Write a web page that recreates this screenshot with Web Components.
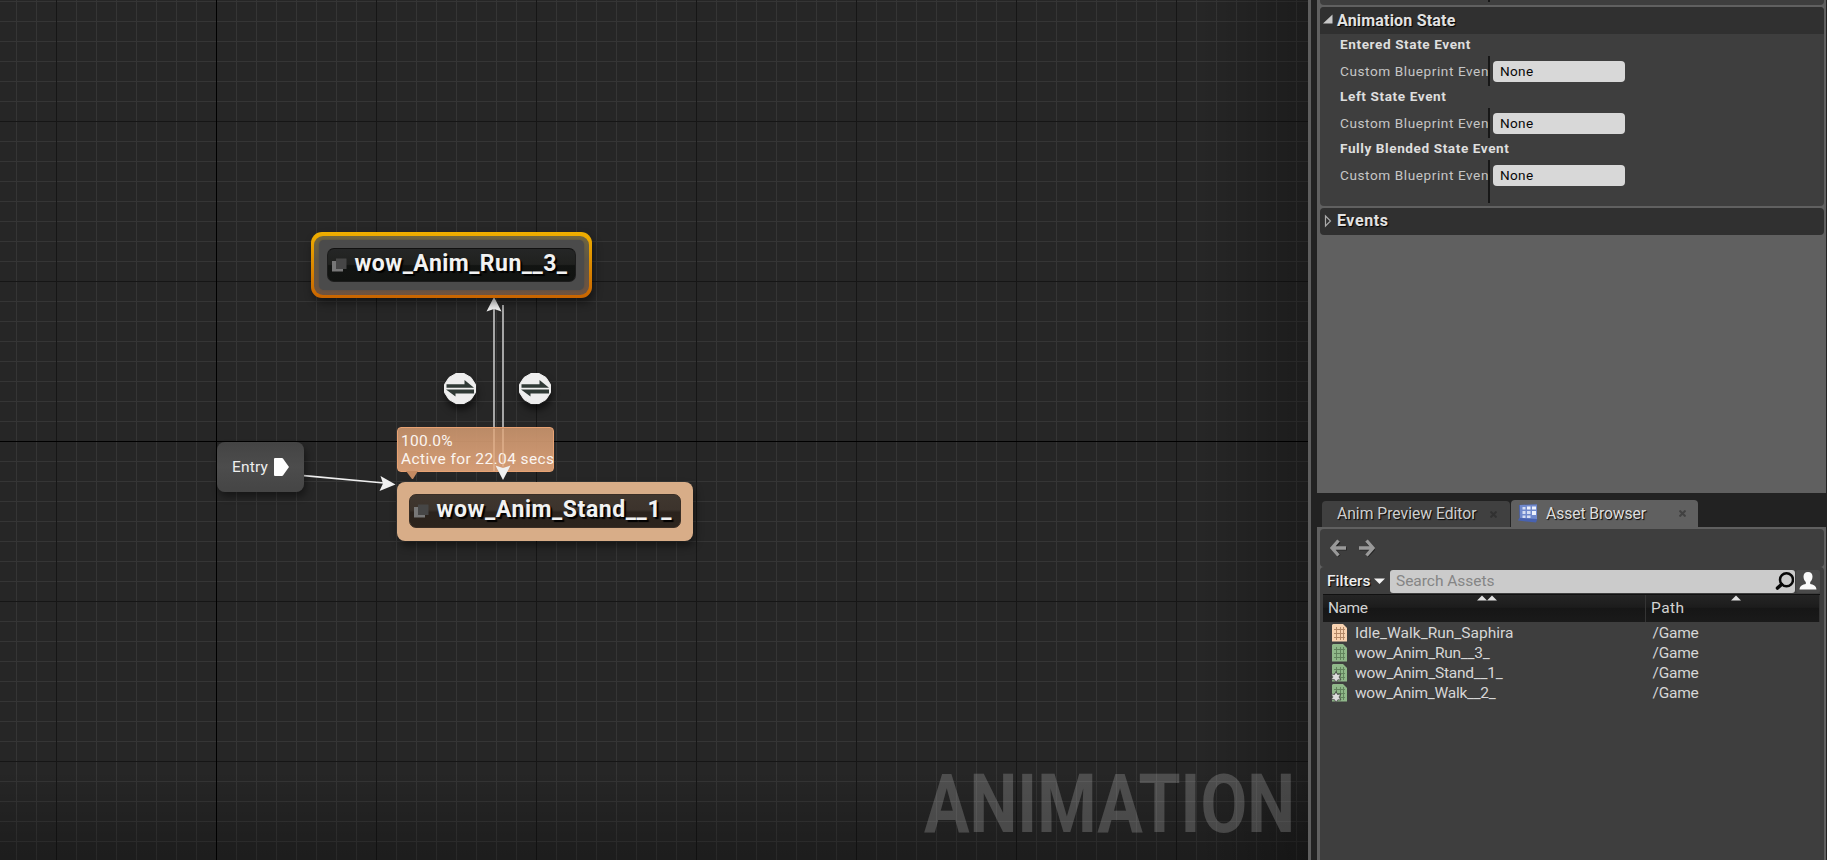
<!DOCTYPE html>
<html lang="en">
<head>
<meta charset="utf-8">
<title>Animation State Machine</title>
<style>
html,body{margin:0;height:100%;background:#222;overflow:hidden}
body{font-family:Roboto,"Liberation Sans",sans-serif;color:#dcdcdc}
</style>
</head>
<body>
<anim-editor></anim-editor>
<script>
const define=(name,html,setup)=>customElements.define(name,class extends HTMLElement{
  connectedCallback(){
    if(this.shadowRoot)return;
    const t=document.createElement('template');
    t.innerHTML=html;
    this.attachShadow({mode:'open'}).appendChild(t.content.cloneNode(true));
    if(setup)setup(this,this.shadowRoot);
  }
});

// Single-line label; "w" tracks the letters so the line takes that many pixels.
define('ui-text',`<style>:host{display:block;white-space:pre;flex:none;line-height:20px}span{display:inline-block}</style><span><slot></slot></span>`,(el,root)=>{
  const s=root.querySelector('span'),w=+el.getAttribute('w');
  if(w)s.style.letterSpacing=((w-s.getBoundingClientRect().width)/el.textContent.length)+'px';
});

define('state-node',`<style>
:host{display:flex;position:absolute;box-sizing:border-box;border-radius:9px;box-shadow:2px 5px 8px rgba(0,0,0,.45)}
:host([kind=selected]){left:311px;top:232px;width:281px;height:66px;padding:16px;background:linear-gradient(#efaf00,#c86400);border-radius:11px}
:host([kind=active]){left:397px;top:482px;width:296px;height:59px;padding:12px;background:#d8ad88;border-radius:8px}
:host([kind=selected])::before{content:"";position:absolute;inset:4px 3px 3px;border-radius:9px;background:linear-gradient(#6f6540,#5f5746 40%,#6f5340)}
:host([kind=selected])::after{content:"";position:absolute;inset:8px;border-radius:5px;background:#4b4b4b;box-shadow:0 0 2px #4d4b49}
.pill{position:relative;z-index:1;flex:1;display:flex;align-items:center;box-sizing:border-box;padding-left:4px;gap:7.500px;border-radius:7px;background:linear-gradient(#252626,#20211f 48%,#121412 52%,#111311);border:1px solid #1c1c1c;border-top-color:#111;height:34px}
:host([kind=active]) .pill{background:linear-gradient(#40372f,#3c332c 46%,#2b231d 54%,#2c241d);border-color:#3a2e25;height:34px}
::slotted(ui-text){font-weight:700;font-size:23px;color:#f2f2f2;text-shadow:2px 2px 1px #000;line-height:30px;margin-top:-2px}
svg{flex:none;margin-top:-1px}
</style><div class="pill"><svg width="15" height="14"><path d="M0 3h5v8h6v2.500H0z" fill="#777"/><path d="M4 .5h10.500v10.500H4z" fill="#464646"/></svg><slot></slot></div>`);

define('entry-node',`<style>
:host{position:absolute;left:217px;top:442px;width:87px;height:50px;box-sizing:border-box;padding:0 15px 0 15px;display:flex;align-items:center;gap:5.500px;border-radius:8px;background:linear-gradient(#444,#4c4c4c 50%,#454545);box-shadow:2px 5px 7px rgba(0,0,0,.4);font-size:15.500px;color:#eee}
svg{flex:none}ui-text{margin-top:-1px}
</style><ui-text w="36">Entry</ui-text><svg width="15" height="18"><path d="M1 0h7q1 0 2 2l5 7-5 7q-1 2-2 2H1q-1 0-1-1V1q0-1 1-1z" fill="#fff"/></svg>`);

define('status-bubble',`<style>
:host{position:absolute;left:397px;top:427px;width:157px;height:45px;box-sizing:border-box;border:1px solid #e8a273;border-radius:4px;background:linear-gradient(rgba(200,147,108,.92),rgba(222,163,122,.94));padding:4px 0 0 3px;font-size:15.500px;color:#fbf5f0}
ui-text{line-height:18px}
svg{position:absolute;left:7px;top:43px}
</style><ui-text w="52">100.0%</ui-text><ui-text w="153.5">Active for 22.04 secs</ui-text><svg width="14" height="9"><path d="M1 0h12L8 8H7z" fill="#c48a62"/></svg>`);

define('transition-badge',`<style>:host{position:absolute;width:32px;height:32px;top:373px;border-radius:50%;box-shadow:1px 5px 7px rgba(0,0,0,.55)}:host([side=left]){left:444px}:host([side=right]){left:519px}svg{display:block}</style>
<svg width="32" height="32"><path d="M12 .5h8l7 4 4.500 7v8l-4.500 7-7 4h-8l-7-4L.5 19.500v-8L5 4.500z" fill="#eee" stroke="#eee" stroke-linejoin="round"/><path d="M2.500 11.200h18V6.900l9.500 7.800H2.500z" fill="#303a36"/><path d="M30 16.500H2l9.500 7v-3H30z" fill="#303a36"/></svg>`);

define('state-graph',`<style>
:host{display:block;position:relative;overflow:hidden;background-color:#262626;background-image:
 linear-gradient(#000,#000),linear-gradient(#000,#000),
 linear-gradient(90deg,#161616 1px,transparent 1px),linear-gradient(#161616 1px,transparent 1px),
 linear-gradient(90deg,#353535 1px,transparent 1px),linear-gradient(#353535 1px,transparent 1px);
 background-size:1px 100%,100% 1px,160px 160px,160px 160px,20px 20px,20px 20px;
 background-position:216px 0,0 441px,56px 0,0 121px,16px 0,0 1px;
 background-repeat:no-repeat,no-repeat,repeat,repeat,repeat,repeat}
.shade{position:absolute;inset:0;background:linear-gradient(90deg,transparent 1200px,rgba(0,0,0,.28)),linear-gradient(transparent 770px,rgba(0,0,0,.25))}
.wires{position:absolute;inset:0}
.mark{position:absolute;right:13px;bottom:2.500px;width:371px;height:106px;font-weight:700;font-size:81px;color:rgba(255,255,255,.19)}
.mark ui-text{line-height:106px;transform-origin:0 50%;width:max-content}
</style>
<div class="shade"></div>
<div class="mark"><ui-text>ANIMATION</ui-text></div>
<svg class="wires" width="1308" height="860"><g stroke="#bdbdbd" stroke-width="1.700" fill="none"><path d="M494 308V471M503 305V471"/><path stroke="#eee" d="M304 475.700L384 483"/></g></svg>
<status-bubble></status-bubble>
<svg class="wires" width="1308" height="860"><g fill="#f0f0f0"><path d="M494 297l7.500 14.500-7.500-2.500-7.500 2.500z"/><path d="M503 480l-7.500-14.500 7.500 2.500 7.500-2.500z"/><path d="M395.500 484.500L379.500 491l3.500-7.500-2.500-7.500z"/></g><path d="M494 429V471M503 429V466" stroke="#ecc09c" stroke-width="1.500" opacity=".5"/></svg>
<entry-node></entry-node>
<state-node kind="selected"><ui-text w="213">wow_Anim_Run__3_</ui-text></state-node>
<state-node kind="active"><ui-text w="235.500">wow_Anim_Stand__1_</ui-text></state-node>
<transition-badge side="left"></transition-badge><transition-badge side="right"></transition-badge>`,(el,root)=>{
  // condense the watermark to the width of its box
  const t=root.querySelector('.mark ui-text');
  t.style.transform='scaleX('+371/t.getBoundingClientRect().width+')';
});

define('event-group',`<style>
:host{display:block;height:52px;font-size:13.600px}
.title{height:22px;padding-left:20px;font-weight:700;color:#dedede}
.title ui-text{line-height:25.500px}
.row{display:flex;height:30px;align-items:center}
.name{width:148px;padding-left:20px;color:#c6c6c6;flex:none}
.bar{width:2px;height:30px;background:#171717;flex:none}
:host([last]) .bar{height:43px;align-self:flex-start}
.input{margin-left:2.500px;width:132px;height:21px;box-sizing:border-box;padding-left:7.500px;border-radius:4px;background:#d8d8d8;color:#080808}
.input ui-text{line-height:21px}
</style><div class="title"><slot></slot></div><div class="row"><div class="name"><ui-text w="149">Custom Blueprint Even</ui-text></div><div class="bar"></div><div class="input"><ui-text w="33.500">None</ui-text></div></div>`);

define('details-panel',`<style>
:host{display:flex;flex-direction:column;box-sizing:border-box;height:493px;padding:0 2px 0 3px;background:#606060;gap:2px}
.prev{height:5px;background:#3e3e3e;border-radius:0 0 4px 4px;flex:none}
.prev i{display:block;width:2px;height:2px;margin-left:168px;background:#171717}
.cat{background:#3e3e3e;border-radius:4px;overflow:hidden;flex:none}
.open{height:199px}
header{display:flex;align-items:center;height:27px;background:#303030;font-size:16px;font-weight:700;color:#e2e2e2;text-shadow:1px 1px 1px #000}
header svg{width:17px;height:16px;flex:none}
header ui-text{line-height:27px;height:27px}
</style>
<div class="prev"><i></i></div>
<div class="cat open"><header><svg><path d="M12.500 1.500v9H3z" fill="#c8c8c8"/></svg><ui-text w="118.500">Animation State</ui-text></header>
<event-group><ui-text w="131">Entered State Event</ui-text></event-group><event-group><ui-text w="106.500">Left State Event</ui-text></event-group><event-group last><ui-text w="169.500">Fully Blended State Event</ui-text></event-group></div>
<div class="cat"><header><svg><path d="M5.500 2v10l5-5z" fill="none" stroke="#aaa" stroke-width="1.200"/></svg><ui-text w="51.500" style="line-height:26px">Events</ui-text></header></div>`);

define('dock-tab',`<style>
:host{display:flex;align-items:center;box-sizing:border-box;height:26px;width:188px;background:#404040;border-radius:4px 4px 0 0;font-size:15.700px;color:#cfcfcf;text-shadow:1px 1px 1px #000;padding:0 13px 0 15px}
:host([active]){height:27px;width:187px;background:#606060;padding:0 12px 0 7px;gap:8px;color:#dedede}
.x{margin-left:auto;width:7px;height:7px}
::slotted(svg){flex:none}
</style><slot></slot><svg class="x"><path d="M.5.5l6 6M6.500.5l-6 6" stroke="#242424" stroke-width="2" opacity=".5"/></svg>`);

define('asset-row',`<style>
:host{display:flex;height:20.100px;align-items:center;padding-left:12px;font-size:15.500px;color:#d6d6d6;--c:#8fb789;--l:#5b7a56}
:host([kind=blend]){--c:#f9d3b1;--l:#a87d5c}
svg{width:15px;height:18px;flex:none;margin-right:8px}
.star{display:none}:host([dirty]) .star{display:block}
::slotted(.name){width:297.500px}
</style><svg overflow="visible"><path d="M1 0h10l4 4v13.500H0V1z" style="fill:var(--c)"/><path d="M2 5.500h11M2 9.500h11M2 13.500h11M4.500 3v13M8.500 3v13M11.500 3v13" style="stroke:var(--l)" stroke-width="1" opacity=".85"/><path class="star" d="M4 7.500l1.500 3 3.500-.5-2 3 2 3-3.200-.2L4 18.500l-1.500-2.800L-1 15.500l2-2.500-2-3 3.500.5z" fill="#ddd" stroke="#333" stroke-width=".7"/></svg><slot></slot>`);

define('asset-browser',`<style>
:host{display:flex;flex-direction:column;box-sizing:border-box;height:333px;padding:2px 2px 0 3px;background:#606060;font-size:15.500px}
.nav{height:37.500px;background:#3e3e3e;border-radius:4px;display:flex;align-items:center;gap:10.500px;padding-left:10px;box-sizing:border-box;flex:none}
.body{flex:1;background:#3e3e3e;border-radius:4px 4px 0 0;padding:2.500px 4px 0 3px}
.bar{display:flex;height:24px;align-items:center;margin-bottom:1px}
.filters{display:flex;align-items:center;width:67px;padding-left:4px;box-sizing:border-box;color:#eee;font-weight:500;text-shadow:1px 1px 1px #000;gap:3px}
.search{flex:1;display:flex;align-items:center;justify-content:space-between;height:23px;background:#cbcbcb;border-radius:3px;padding:0 1px 0 6px;color:#858585}
.bar ui-text{margin-top:-1px}
.user{width:24px;height:23px;margin-left:1px;background:#4a4a4a;display:flex;align-items:center;justify-content:center;border-radius:2px}
.head{display:grid;grid-template-columns:323px 1fr;height:27.500px;background:linear-gradient(#252525,#1c1c1c 45%,#161616 50%,#1a1a1a);border-top:1px solid #111;box-sizing:border-box;color:#d2d2d2}
.head>div{position:relative;padding:3px 0 0 5px;border-right:1px solid #343434;box-sizing:border-box}
.head svg{position:absolute;top:0}
.rows{margin-left:-3px;padding-top:1px}
</style>
<div class="nav"><svg width="17" height="18"><g fill="none" stroke-width="3.300"><path d="M8.500 2L2 9l6.500 7M2.500 9H16" stroke="#222" transform="translate(.8 .8)"/><path d="M8.500 1.500L2 9l6.500 7.500M2.500 9H16" stroke="#999"/></g></svg><svg width="17" height="18"><g fill="none" stroke-width="3.300"><path d="M8.500 2L15 9l-6.500 7M14.500 9H1" stroke="#222" transform="translate(.8 .8)"/><path d="M8.500 1.500L15 9l-6.500 7.500M14.500 9H1" stroke="#999"/></g></svg></div>
<div class="body">
<div class="bar"><div class="filters"><ui-text w="43.500">Filters</ui-text><svg width="12" height="7"><path d="M0 .5h11L5.500 6z" fill="#f3f3f3"/></svg></div>
<div class="search"><ui-text w="98.500">Search Assets</ui-text><svg width="19" height="18"><circle cx="11.500" cy="7.800" r="6.500" fill="none" stroke="#080808" stroke-width="2.500"/><path d="M6.500 12.500L2.500 16" stroke="#080808" stroke-width="3.600" stroke-linecap="round"/></svg></div>
<div class="user"><svg width="18" height="18"><path d="M9 0c3 0 4.500 2 4.500 4.500 0 2.500-1 4.500-2.300 5.500v2c3 .6 6 1.500 6.300 5.500H.5C.8 13.500 3.800 12.600 6.800 12v-2C5.500 9 4.500 7 4.500 4.500 4.500 2 6 0 9 0z" fill="#fafafa"/></svg></div></div>
<div class="head"><div><ui-text w="39.500">Name</ui-text><svg style="left:153.500px" width="20" height="6"><path d="M0 5.500l5-5 5 5 5-5 5 5z" fill="#e0e0e0"/></svg></div><div><ui-text w="33.500">Path</ui-text><svg style="left:85px" width="10" height="6"><path d="M0 5.500l5-5 5 5z" fill="#e0e0e0"/></svg></div></div>
<div class="rows">
<asset-row kind="blend"><ui-text class="name" w="158.500">Idle_Walk_Run_Saphira</ui-text><ui-text w="46">/Game</ui-text></asset-row>
<asset-row><ui-text class="name" w="134.500">wow_Anim_Run__3_</ui-text><ui-text w="46">/Game</ui-text></asset-row>
<asset-row dirty><ui-text class="name" w="147.500">wow_Anim_Stand__1_</ui-text><ui-text w="46">/Game</ui-text></asset-row>
<asset-row dirty><ui-text class="name" w="140.500">wow_Anim_Walk__2_</ui-text><ui-text w="46">/Game</ui-text></asset-row>
</div></div>`);

define('anim-editor',`<style>
:host{display:grid;grid-template-columns:1308px 3px 6px 509px 1px;height:860px;width:1827px;background:#222}
.edge{background:#5e5e5e}
.side{display:flex;flex-direction:column;grid-column:4}
.tabs{display:flex;align-items:flex-end;gap:1px;height:34px;padding-left:5px}
</style>
<state-graph></state-graph><div class="edge"></div>
<div class="side"><details-panel></details-panel>
<div class="tabs"><dock-tab><ui-text w="139.500" style="margin-top:-1px">Anim Preview Editor</ui-text></dock-tab><dock-tab active><svg width="20" height="19"><path d="M1 1l18-.5V16l-1 2.500L0 16.500l1.500-3z" fill="#4862b0"/><path d="M2 1l17-.5V15l-17-1z" fill="#7089cc"/><g fill="#eef2fc"><path d="M9 2.500h3.500v3H9zM14 2.500h4v3h-4zM14 7h4v4h-4z"/><path d="M4.500 3h3v2.500h-3zM4.500 7h3v3h-3zM9 7h3.500v3H9zM4.500 11.500h3V14h-3zM9 11.500h3.500V14H9z" opacity=".8"/></g></svg><ui-text w="100">Asset Browser</ui-text></dock-tab></div>
<asset-browser></asset-browser></div>`);
</script>
</body>
</html>
